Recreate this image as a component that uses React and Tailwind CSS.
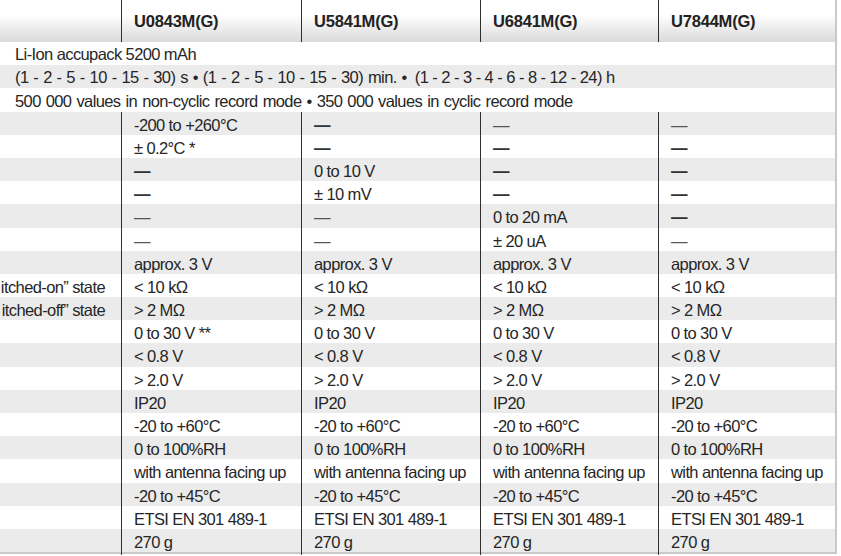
import React from "react";

const COLS = "grid grid-cols-[121px_180px_179px_178px_177px]";

// rows after the three full-width lines; "B" marks a heavy dash
const rows = [
  ["", "-200 to +260°C", "B", "—", "—"],
  ["", "± 0.2°C *", "B", "B", "B"],
  ["", "B", "0 to 10 V", "B", "B"],
  ["", "B", "± 10 mV", "B", "B"],
  ["", "—", "—", "0 to 20 mA", "B"],
  ["", "—", "—", "± 20 uA", "—"],
  ["", "approx. 3 V", "approx. 3 V", "approx. 3 V", "approx. 3 V"],
  ["itched-on” state", "< 10 kΩ", "< 10 kΩ", "< 10 kΩ", "< 10 kΩ"],
  ["itched-off” state", "> 2 MΩ", "> 2 MΩ", "> 2 MΩ", "> 2 MΩ"],
  ["", "0 to 30 V **", "0 to 30 V", "0 to 30 V", "0 to 30 V"],
  ["", "< 0.8 V", "< 0.8 V", "< 0.8 V", "< 0.8 V"],
  ["", "> 2.0 V", "> 2.0 V", "> 2.0 V", "> 2.0 V"],
  ["", "IP20", "IP20", "IP20", "IP20"],
  ["", "-20 to +60°C", "-20 to +60°C", "-20 to +60°C", "-20 to +60°C"],
  ["", "0 to 100%RH", "0 to 100%RH", "0 to 100%RH", "0 to 100%RH"],
  ["", "with antenna facing up", "with antenna facing up", "with antenna facing up", "with antenna facing up"],
  ["", "-20 to +45°C", "-20 to +45°C", "-20 to +45°C", "-20 to +45°C"],
  ["", "ETSI EN 301 489-1", "ETSI EN 301 489-1", "ETSI EN 301 489-1", "ETSI EN 301 489-1"],
  ["", "270 g", "270 g", "270 g", "270 g"],
];

const spans = [
  <span>Li-Ion accupack 5200 mAh</span>,
  <>
    <span className="[word-spacing:0.9px]">(1 - 2 - 5 - 10 - 15 - 30) s • (1 - 2 - 5 - 10 - 15 - 30) min. •</span>
    <span className="ml-[8px] [word-spacing:0.1px]">(1 - 2 - 3 - 4 - 6 - 8 - 12 - 24) h</span>
  </>,
  <span className="[word-spacing:1px]">500 000 values in non-cyclic record mode • 350 000 values in cyclic record mode</span>,
];

const Cell = ({ value }) => {
  if (value === "B") return <span className="font-bold text-[#333]">—</span>;
  if (value === "—") return <span className="text-[#555]">—</span>;
  return <span>{value}</span>;
};

export default function App() {
  return (
    <div className="w-[841px] h-[556px] bg-white font-['Liberation_Sans',Arial,sans-serif] text-[16.5px] tracking-[-0.6px] text-[#262626]">
      <div className="w-[837px] border-r-2 border-b-2 border-[#c9c9c9]">
        {/* header */}
        <div className={`${COLS} h-[42px] bg-linear-to-b from-white from-35% to-[#dadada] font-bold tracking-[-0.2px] text-[#222]`}>
          <div />
          {["U0843M(G)", "U5841M(G)", "U6841M(G)", "U7844M(G)"].map((h) => (
            <div key={h} className="flex items-center border-l-[1.5px] border-[#2f2f2f] pl-[12px] pt-[1px]">
              {h}
            </div>
          ))}
        </div>

        {spans.map((s, i) => (
          <div
            key={i}
            className={`h-[23.2px] flex items-center pl-[15px] pt-[2px] whitespace-pre ${i % 2 ? "bg-[#ebebeb]" : "bg-white"}`}
          >
            {s}
          </div>
        ))}

        {rows.map((r, i) => (
          <div key={i} className={`${COLS} h-[23.2px] ${i % 2 ? "bg-white" : "bg-[#ebebeb]"}`}>
            <div className="flex items-center justify-end pr-[16px] pt-[1px] overflow-hidden whitespace-nowrap">{r[0]}</div>
            {r.slice(1).map((v, j) => (
              <div key={j} className="flex items-center border-l-[1.5px] border-[#2f2f2f] pl-[12px] pt-[1px] whitespace-nowrap">
                <Cell value={v} />
              </div>
            ))}
          </div>
        ))}
      </div>
    </div>
  );
}
